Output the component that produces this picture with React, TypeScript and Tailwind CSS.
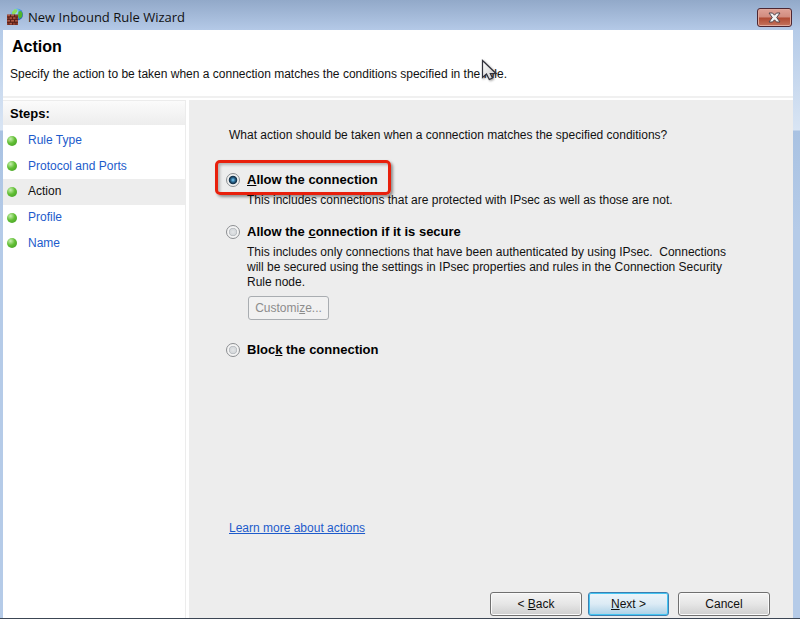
import type { ReactNode } from "react";

const steps = ["Rule Type", "Protocol and Ports", "Action", "Profile", "Name"];

function FirewallIcon() {
  return (
    <svg width="18" height="18" viewBox="0 0 18 18" aria-hidden="true">
      <defs>
        <radialGradient id="globe" cx="35%" cy="30%" r="75%">
          <stop offset="0" stopColor="#d8f6ff" />
          <stop offset="0.5" stopColor="#4fa6ea" />
          <stop offset="1" stopColor="#1c50b4" />
        </radialGradient>
      </defs>
      <circle cx="11" cy="6.5" r="6" fill="url(#globe)" />
      <path d="M6 4 8.500 1.300l3 .2L11 4 8.500 6.500H6z" fill="#8bdc5c" />
      <path d="M12.500 3.500 15 3l1.500 2.500-.5 3.500-2.500 2-1.500-3z" fill="#4fb52c" />
      <path d="M1 6.500h11V17H1z" fill="#8e3d2c" />
      <path d="M1 9h11M1 11.700h11M1 14.400h11M4.500 6.500V9M8.500 6.500V9M3 9v2.700M6.500 9v2.700M10 9v2.700M4.500 11.700v2.700M8.500 11.700v2.700M3 14.400V17M6.500 14.400V17M10 14.400V17" stroke="#4f1c16" strokeWidth="0.8" />
      <path d="M1.500 7.300H4M5.200 7.300H8M3.600 10h2.300M7.200 10h2.300M1.500 12.700H4M5.200 12.700H8M9.200 12.700h2.300M3.600 15.400h2.300" stroke="#c0705a" strokeWidth="0.8" />
    </svg>
  );
}

function Pointer() {
  return (
    <svg className="absolute left-[481px] top-[59px] drop-shadow-[1px_1px_1px_rgba(0,0,0,0.4)]" width="22" height="24" viewBox="0 0 22 24" aria-hidden="true">
      <defs>
        <linearGradient id="pointer" x1="0" y1="0" x2="1" y2="1">
          <stop offset="0" stopColor="#ffffff" />
          <stop offset="1" stopColor="#c8c8c8" />
        </linearGradient>
      </defs>
      <path d="M1.500 1.500v17l4-3.500 2.800 5.500 3.200-1.500-2.200-4.500h5.700z" fill="url(#pointer)" stroke="#30303a" strokeWidth="1.200" />
    </svg>
  );
}

function Choice({ id, checked, marked, children }: { id: string; checked?: boolean; marked?: boolean; children: ReactNode }) {
  return (
    <div className="relative flex h-5 items-center gap-[7px]">
      <input
        id={id}
        type="radio"
        name="action"
        defaultChecked={checked}
        className="size-[14px] shrink-0 appearance-none rounded-full border border-[#8b8e91] bg-[radial-gradient(circle_closest-side_at_center,#e4e6e8_0,#d4d7da_50%,#b8bcc0_62%,#f4f4f4_76%)] checked:bg-[radial-gradient(circle_closest-side_at_center,#8fd3f2_0,#3f8cbc_22%,#14354f_56%,#1c3c55_64%,#f0f0f0_78%)]"
      />
      <label htmlFor={id} className="text-[13px] font-bold leading-5 text-black">
        {children}
      </label>
      {marked && (
        <span className="pointer-events-none absolute -left-[11px] -top-[10px] h-[35px] w-[176px] rounded-[5px] border-3 border-[#e8200c] shadow-[2px_2px_3px_rgba(0,0,0,0.4),inset_2px_2px_3px_rgba(0,0,0,0.25)]" />
      )}
    </div>
  );
}

const wizardButton =
  "h-6 rounded-[3px] border border-[#707070] bg-linear-to-b from-[#f4f4f4] from-0% via-[#e6e6e6] via-50% to-[#cfcfcf] shadow-[inset_0_0_0_1px_#fafafa] text-[12px] leading-4 text-[#111]";

export default function App() {
  return (
    <div className="relative flex min-h-screen flex-col border-b border-[#3c4654] bg-[#b5cbe8] font-['Liberation_Sans',Arial,sans-serif] text-[12px] leading-[15px] text-[#111]">
      <header className="flex h-[30px] shrink-0 items-center bg-linear-to-b from-[#92a9c9] to-[#b4c9e7] pl-[6px] pr-2 pt-1">
        <FirewallIcon />
        <span className="ml-1 flex-1 font-['Open_Sans','Noto_Sans',sans-serif] text-[13px] leading-5 text-[#111]">New Inbound Rule Wizard</span>
        <button
          type="button"
          aria-label="Close"
          className="flex h-[19px] w-[35px] items-center justify-center rounded-[3px] border border-[#4d2732] bg-[linear-gradient(#dfa297_0,#d18b7e_48%,#b04a33_52%,#c4745e_100%)] shadow-[inset_0_0_0_1px_#e0a99c]"
        >
          <svg width="13" height="11" viewBox="0 0 13 11" aria-hidden="true">
            <path d="M1 1h3.500l2 2.200L8.500 1H12L8.700 5.500 12 10H8.500l-2-2.200L4.500 10H1l3.300-4.500z" fill="#f3f3f3" stroke="#50464e" strokeWidth="1" />
          </svg>
        </button>
      </header>

      <div className="flex flex-1 flex-col bg-[linear-gradient(#b5cbe8_0,#d9e5f4_100px,#a9c2e2_101px,#b5cbe8_200px)] pl-[3px] pr-[7px]">
        <div className="flex flex-1 flex-col bg-white">
          <section className="h-[66px] px-[7px] pt-2">
            <h1 className="pl-[2px] text-[16px] font-bold leading-[18px] text-black">Action</h1>
            <p className="mt-[11px]">Specify the action to be taken when a connection matches the conditions specified in the rule.</p>
          </section>
          <div className="mb-[2px] h-[2px] bg-[#f0f0f0]" />

          <div className="flex flex-1">
            <nav aria-labelledby="steps" className="mr-[3px] w-[183px] shrink-0 border-r border-[#ececec]">
              <h2 id="steps" className="h-[25px] border-t border-[#ececec] bg-linear-to-b from-[#fbfbfb] to-[#ededed] pl-[7px] text-[13px] font-bold leading-[25px] text-black">Steps:</h2>
              <ol className="mt-[3px] grid h-32 grid-rows-5">
                {steps.map((step) => (
                  <li key={step} className={step === "Action" ? "flex items-center bg-[#ededed]" : "flex items-center"}>
                    <span className="ml-1 size-[10px] rounded-full bg-[radial-gradient(circle_at_35%_30%,#c8efb0_0,#62bf35_45%,#3f9a22_100%)]" />
                    {step === "Action" ? (
                      <span aria-current="step" className="ml-[11px]">{step}</span>
                    ) : (
                      <a href="#" className="ml-[11px] text-[#1d5bcb]">{step}</a>
                    )}
                  </li>
                ))}
              </ol>
            </nav>

            <main className="flex flex-1 flex-col bg-[#ededed] pb-[2px] pl-[37px] pr-[23px] pt-7">
              <p className="pl-[3px]">What action should be taken when a connection matches the specified conditions?</p>

              <div className="mt-[27px]">
                <Choice id="allow" checked marked>
                  <u>A</u>llow the connection
                </Choice>
                <p className="mt-[3px] pl-[21px]">This includes connections that are protected with IPsec as well as those are not.</p>
              </div>

              <div className="mt-[14px]">
                <Choice id="secure">
                  Allow the <u>c</u>onnection if it is secure
                </Choice>
                <p className="mt-[3px] max-w-[510px] pl-[21px]">
                  This includes only connections that have been authenticated by using IPsec.&nbsp; Connections will be secured using the settings in IPsec properties and rules in the Connection Security Rule node.
                </p>
                <button type="button" disabled className="ml-[22px] mt-[6px] block h-6 w-[81px] rounded-[3px] border border-[#a9adb1] bg-[#f1f1f1] text-[12px] leading-4 text-[#8c8c8c]">
                  Customi<u>z</u>e...
                </button>
              </div>

              <div className="mt-5">
                <Choice id="block">
                  Bloc<u>k</u> the connection
                </Choice>
              </div>

              <a href="#" className="mt-[161px] ml-[3px] self-start text-[#1d5bcb] underline">Learn more about actions</a>

              <div className="mt-auto flex justify-end">
                <button type="button" className={`${wizardButton} w-[92px]`}>
                  &lt; <u>B</u>ack
                </button>
                <button
                  type="button"
                  className="ml-[6px] h-6 w-[81px] rounded-[3px] border border-[#3c7fb1] bg-linear-to-b from-[#eef5fa] from-0% via-[#dcebf5] via-50% to-[#a9d0e6] text-[12px] leading-4 text-[#111] shadow-[inset_0_0_0_1px_#45c5f2]"
                >
                  <u>N</u>ext &gt;
                </button>
                <button type="button" className={`${wizardButton} ml-[9px] w-[92px]`}>
                  Cancel
                </button>
              </div>
            </main>
          </div>
        </div>
      </div>
      <Pointer />
    </div>
  );
}
